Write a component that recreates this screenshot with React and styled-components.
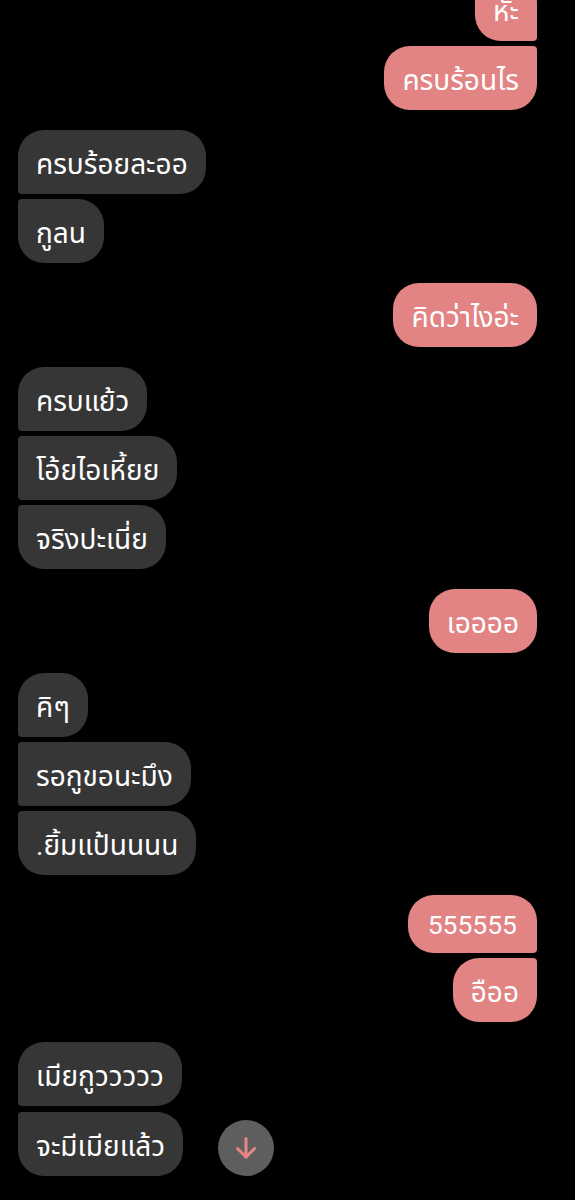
import React from 'react';
import styled, { createGlobalStyle } from 'styled-components';

const GlobalStyle = createGlobalStyle`
  html, body {
    margin: 0;
    padding: 0;
    background: #000;
  }
  body {
    font-family: "Roboto", "Noto Sans Thai", "Noto Sans", sans-serif;
    overflow: hidden;
  }
`;

const Screen = styled.div`
  width: 575px;
  height: 1200px;
  background: #000;
  overflow: hidden;
`;

const Thread = styled.div`
  display: flex;
  flex-direction: column;
  gap: 20px;
  padding: 0 38px 0 18px;
  margin-top: -23px;
`;

const Group = styled.div`
  display: flex;
  flex-direction: column;
  align-items: ${(p) => (p.$mine ? 'flex-end' : 'flex-start')};
  gap: 5px;
`;

const BIG = '26px';
const SMALL = '4px';

const Bubble = styled.div`
  box-sizing: border-box;
  height: ${(p) => (p.$latin ? '58px' : '64px')};
  display: flex;
  align-items: center;
  padding: ${(p) => (p.$latin ? '1px 20px 0 20px' : '7px 18px 0 18px')};
  font-size: ${(p) => (p.$latin ? '26.5px' : '28px')};
  color: #fff;
  white-space: nowrap;
  background: ${(p) => (p.$mine ? '#e28384' : '#363636')};
  border-radius: ${(p) => {
    const tl = !p.$mine && !p.$first ? SMALL : BIG;
    const bl = !p.$mine && !p.$last ? SMALL : BIG;
    const tr = p.$mine && !p.$first ? SMALL : BIG;
    const br = p.$mine && !p.$last ? SMALL : BIG;
    return `${tl} ${tr} ${br} ${bl}`;
  }};
`;

const LastRow = styled.div`
  display: flex;
  align-items: center;
  gap: 35px;
`;

const ScrollDown = styled.button`
  width: 56px;
  height: 56px;
  border-radius: 50%;
  border: none;
  padding: 0;
  background: #5e5e5e;
  display: flex;
  align-items: center;
  justify-content: center;
  margin-top: 9px;
`;

const groups = [
  { mine: true, msgs: ['หั้ะ', 'ครบร้อนไร'] },
  { mine: false, msgs: ['ครบร้อยละออ', 'กูลน'] },
  { mine: true, msgs: ['คิดว่าไงอ่ะ'] },
  { mine: false, msgs: ['ครบแย้ว', 'โอ้ยไอเหี้ยย', 'จริงปะเนี่ย'] },
  { mine: true, msgs: ['เออออ'] },
  { mine: false, msgs: ['คิๆ', 'รอกูขอนะมึง', '.ยิ้มแป้นนนน'] },
  { mine: true, msgs: ['555555', 'อืออ'] },
  { mine: false, msgs: ['เมียกูววววว', 'จะมีเมียแล้ว'], withButton: true },
];

function ArrowDown() {
  return (
    <svg width="24" height="24" viewBox="0 0 24 24" fill="none" stroke="#e88587" strokeWidth="3" strokeLinecap="round" strokeLinejoin="round">
      <path d="M12 2.5v18.5" />
      <path d="M3.5 12.5l8.5 8.5 8.5-8.5" />
    </svg>
  );
}

export default function App() {
  return (
    <Screen>
      <GlobalStyle />
      <Thread>
        {groups.map((g, gi) => (
          <Group key={gi} $mine={g.mine}>
            {g.msgs.map((m, i) => {
              const bubble = (
                <Bubble
                  key={i}
                  $mine={g.mine}
                  $latin={/^[0-9]+$/.test(m)}
                  $first={i === 0}
                  $last={i === g.msgs.length - 1}
                >
                  {m}
                </Bubble>
              );
              if (g.withButton && i === g.msgs.length - 1) {
                return (
                  <LastRow key={i}>
                    {bubble}
                    <ScrollDown aria-label="Scroll down">
                      <ArrowDown />
                    </ScrollDown>
                  </LastRow>
                );
              }
              return bubble;
            })}
          </Group>
        ))}
      </Thread>
    </Screen>
  );
}
